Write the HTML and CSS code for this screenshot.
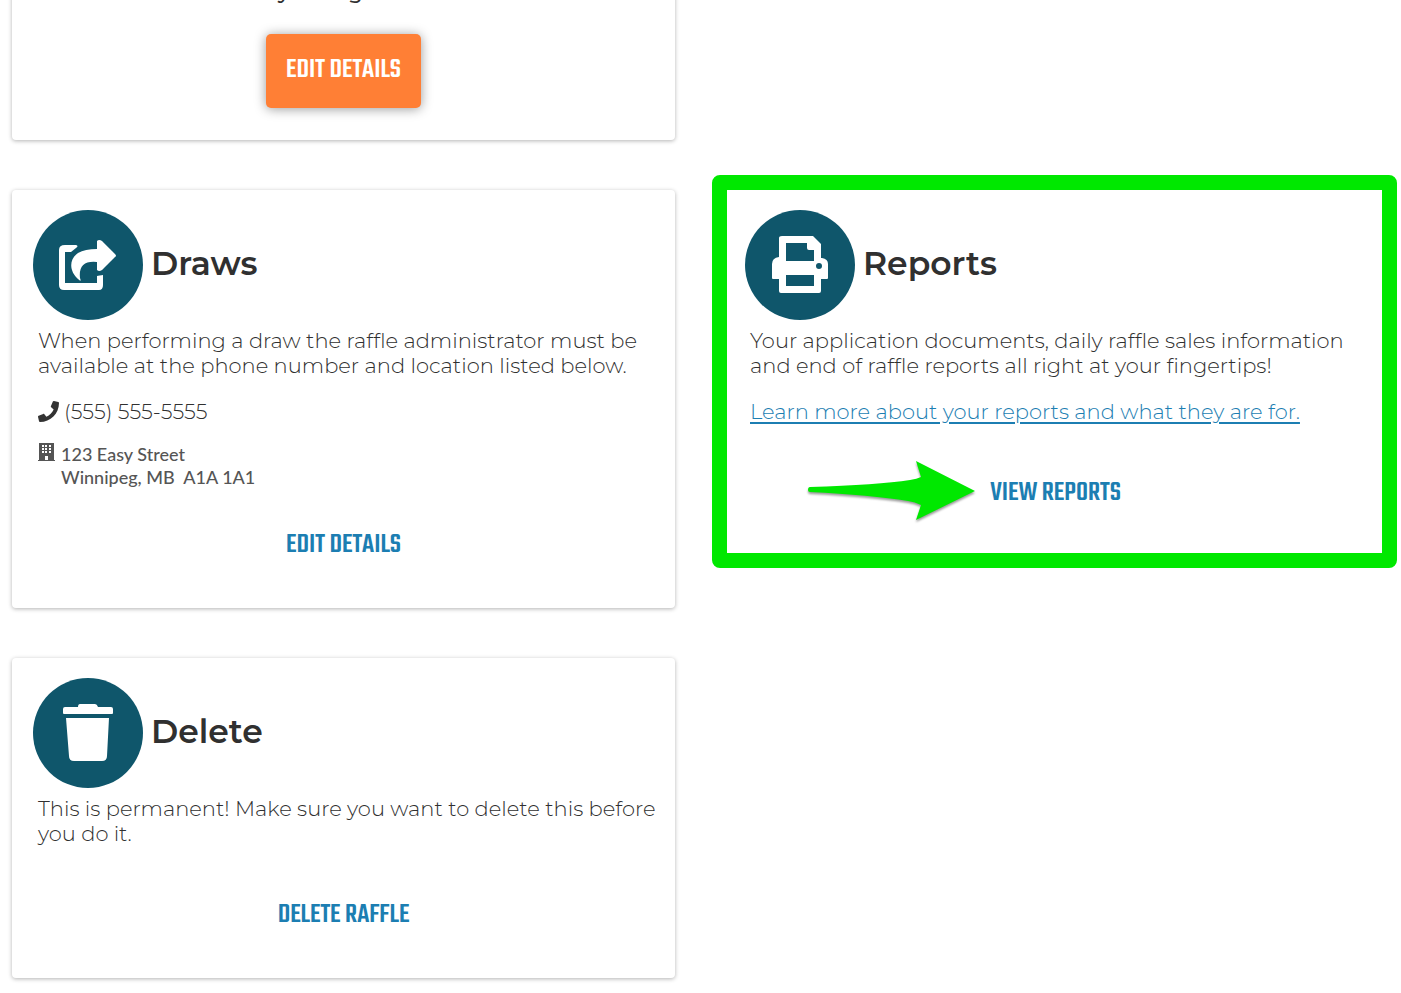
FILE: index.html
```html
<!DOCTYPE html>
<html lang="en">
<head>
  <meta charset="UTF-8">
  <meta name="viewport" content="width=device-width, initial-scale=1.0">
  <title>Raffle Dashboard</title>
  <link rel="stylesheet" href="styles.css">
</head>
<body>
  <main class="dashboard">
    <section class="card card-status">
      <p class="status-text">Any changes left?</p>
      <button class="button button-primary" type="button">Edit Details</button>
    </section>

    <section class="card">
      <header class="card-header">
        <span class="card-icon">
          <svg width="110" height="110" viewBox="0 0 110 110" fill="#fff">
            <path d="M32 35H43Q46 36 43 38L38 42H32V73H64V66Q70 65 70 65V75Q70 80 66 80H31Q26 80 26 75V40Q26 35 32 35Z"/>
            <path d="M64 31Q66 29 69 31L82 44Q84 46 82 47L69 60Q66 62 64 60V52Q45 50 47 68Q49 73 45 69C37 62 35 50 45 43Q52 39 64 39Z"/>
          </svg>
        </span>
        <h2>Draws</h2>
      </header>
      <p>When performing a draw the raffle administrator must be available at the phone number and location listed below.</p>
      <p class="phone">
        <svg width="21" height="21" viewBox="0 0 512 512" fill="#333"><path d="M493 25L389 1c-11-3-23 3-27 14l-48 112c-4 10-1 22 7 28l61 50c-36 76-99 140-177 177l-50-61c-7-8-18-11-28-7L15 362c-11 5-17 16-14 28l24 104c2 11 12 18 23 18 257 0 464-208 464-464 0-11-8-21-19-23z"/></svg>
        (555) 555-5555
      </p>
      <address>
        <svg width="17" height="18" viewBox="0 0 17 18"><path fill="#555" d="M1 0H16V17H17V18H0V17H1Z"/><path fill="#fff" d="M4 2h2v2H4zM7 2h2v2H7zM11 2h2v2h-2zM4 5h2v2H4zM7 5h2v2H7zM11 5h2v2h-2zM4 8h2v2H4zM7 8h2v2H7zM11 8h2v2h-2zM7 13h3v4H7z"/></svg>
        <span>123 Easy Street<br>Winnipeg, MB&nbsp; A1A 1A1</span>
      </address>
      <button class="button" type="button">Edit Details</button>
    </section>

    <section class="card card-reports">
      <header class="card-header">
        <span class="card-icon">
          <svg width="110" height="110" viewBox="0 0 110 110" fill="#fff">
            <path fill-rule="evenodd" d="M37 26H68L76 34V48H77Q83 49 83 54V68Q83 69 82 69H76V81Q76 83 74 83H36Q34 83 34 81V69H28Q27 69 27 68V54Q27 48 34 47V28Q34 26 37 26ZM41 33V51H69V40H64Q62 40 62 38V33ZM41 65V76H69V65ZM74 53A3 3 0 1 0 74 59A3 3 0 1 0 74 53Z"/>
          </svg>
        </span>
        <h2>Reports</h2>
      </header>
      <p>Your application documents, daily raffle sales information and end of raffle reports all right at your fingertips!</p>
      <p><a href="#">Learn more about your reports and what they are for.</a></p>
      <div class="action">
        <button class="button" type="button">View Reports</button>
        <svg class="arrow" width="172" height="66" viewBox="0 0 172 66"><path fill="#00e800" d="M4 28Q72 26 104 21Q111 20 115 18L110 2L169 32L110 61L115 46Q109 43 102 42Q65 36 4 33Q2 33 2 31Q2 28 4 28Z"/></svg>
      </div>
    </section>

    <section class="card">
      <header class="card-header">
        <span class="card-icon">
          <svg width="110" height="110" viewBox="0 0 110 110" fill="#fff">
            <path d="M47 26H62Q64 26 65 29H78Q80 29 80 31V35Q80 36 79 36H31Q30 36 30 35V31Q30 29 32 29H45Q45 26 47 26ZM33 40H76L74 78Q74 83 69 83H41Q36 83 36 78Z"/>
          </svg>
        </span>
        <h2>Delete</h2>
      </header>
      <p>This is permanent! Make sure you want to delete this before you do it.</p>
      <button class="button" type="button">Delete Raffle</button>
    </section>
  </main>
</body>
</html>
```
FILE: styles.css
```css
* {
  box-sizing: border-box;
}

body {
  font-family: Montserrat, Inter, sans-serif;
  background-color: #fff;
  color: #303030;
  font-size: 21px;
  font-weight: 300;
  line-height: 25px;
  margin: 0;
}

.dashboard {
  display: grid;
  grid-template-columns: 1fr 1fr;
  column-gap: 49px;
  row-gap: 50px;
  margin-top: -21px;
  padding: 0 14px 15px 12px;
}

.card {
  display: flex;
  flex-direction: column;
  grid-column: 1;
  padding: 20px 16px 25px;
  border-radius: 4px;
  background-color: #fff;
  box-shadow: 0 1px 4px rgba(0, 0, 0, 0.3);
}

.card-status {
  align-items: center;
  padding: 0 16px 32px;
}

/* green highlight frame over the card edges */
.card-reports {
  position: relative;
  grid-column: 2;
  align-self: start;
}

.card-reports::after {
  content: "";
  position: absolute;
  inset: -15px -10px -12px -12px;
  border: 15px solid #00e800;
  border-radius: 8px;
  pointer-events: none;
}

.card-header {
  display: flex;
  align-items: center;
  gap: 8px;
  margin: 0 0 8px 5px;
}

.card-icon {
  width: 110px;
  height: 110px;
  border-radius: 50%;
  background-color: #0f566b;
}

.card-icon svg {
  display: block;
}

h2 {
  font-size: 33px;
  font-weight: 600;
  line-height: 40px;
  margin: 0 0 5px;
}

p {
  margin: 0 0 21px 10px;
}

.status-text {
  font-weight: 500;
  margin: 0 0 18px;
}

a {
  color: #1c7eb2;
  text-underline-offset: 3px;
}

.phone {
  display: flex;
  align-items: center;
  gap: 5px;
  margin-bottom: 19px;
}

address {
  display: flex;
  gap: 6px;
  margin: 0 0 8px 10px;
  color: #555;
  font-family: Lato, sans-serif;
  font-size: 18px;
  font-style: normal;
  font-weight: 500;
  line-height: 23px;
}

.button {
  align-self: center;
  margin-top: 12px;
  padding: 18px 20px 20px;
  border: none;
  border-radius: 5px;
  background-color: transparent;
  color: #1c7eb2;
  font-family: Teko, "Roboto Condensed", Roboto, sans-serif;
  font-size: 28px;
  font-weight: 500;
  line-height: 36px;
  text-transform: uppercase;
  cursor: pointer;
}

.button-primary {
  background-color: #ff7f35;
  box-shadow: 0 1px 12px rgba(0, 0, 0, 0.4);
  color: #fff;
}

.action {
  position: relative;
  align-self: center;
}

.arrow {
  position: absolute;
  top: 14px;
  right: calc(100% - 8px);
  filter: drop-shadow(0 2px 1px rgba(0, 0, 0, 0.4));
}
```
